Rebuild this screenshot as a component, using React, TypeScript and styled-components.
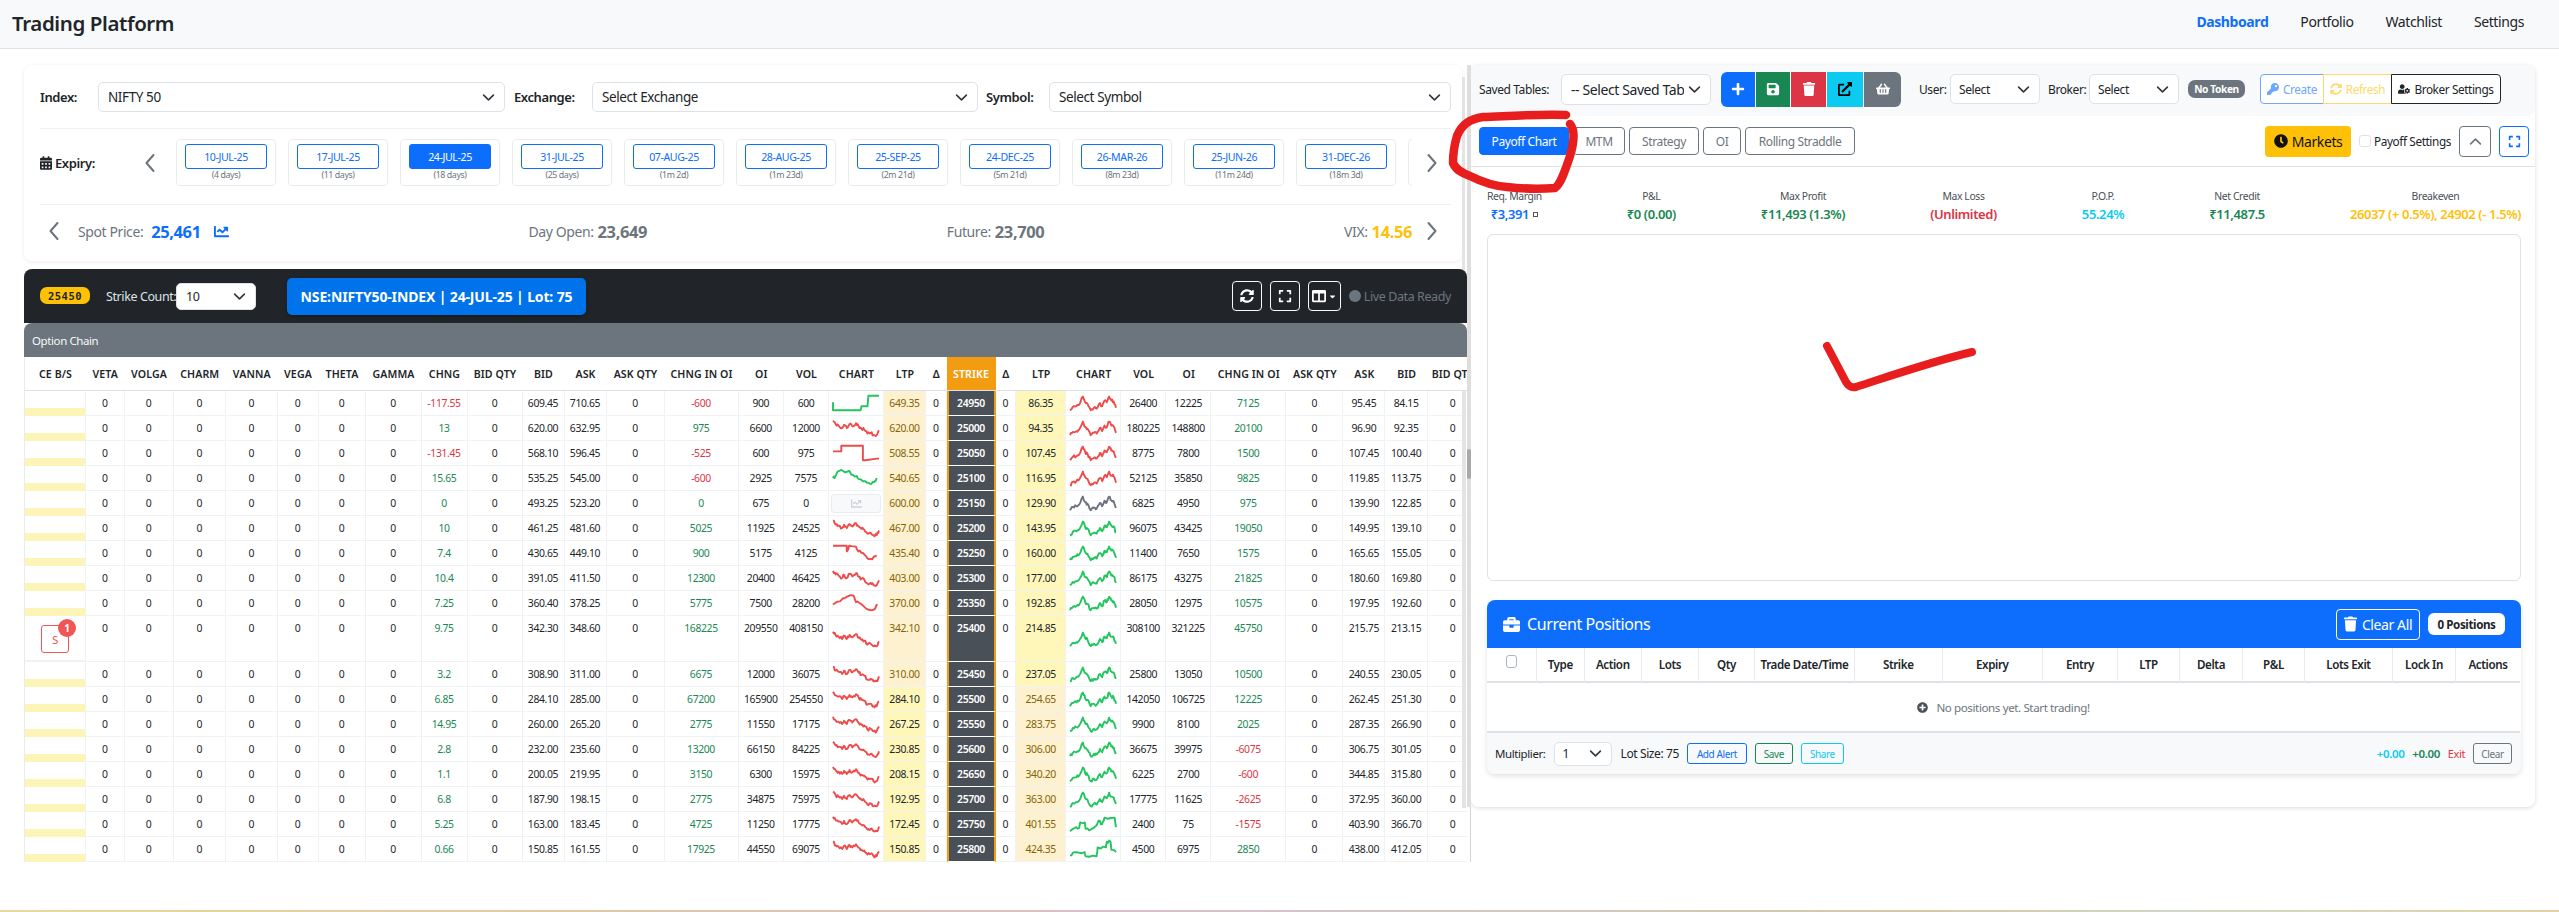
import React from "react";
import styled, { createGlobalStyle } from "styled-components";
import {
  FaCalendarAlt, FaChartLine, FaSyncAlt, FaExpand, FaColumns, FaBriefcase, FaTrash, FaKey, FaUserCog,
  FaClock, FaPlus, FaSave, FaExternalLinkAlt, FaShoppingBasket, FaPlusCircle, FaCaretDown,
} from "react-icons/fa";

const Global = createGlobalStyle`
  html, body { margin: 0; padding: 0; background: #fff; }
  body { font-family: "Noto Sans", "Open Sans", sans-serif; letter-spacing: -0.025em; color: #212529; }
  * { box-sizing: border-box; }
`;

const Page = styled.div`
  width: 2559px; height: 912px; display: flex; flex-direction: column; overflow: hidden; position: relative;
`;
const Nav = styled.header`
  height: 49px; flex: none; background: #f8f9fa; border-bottom: 1px solid #dee2e6;
  display: flex; align-items: flex-start; justify-content: space-between; padding: 9px 35px 0 12px;
`;
const Brand = styled.div`font-size: 20.5px; font-weight: 600; line-height: 28px; color: #212529;`;
const NavLinks = styled.nav`display: flex; gap: 32px; padding-top: 3px;`;
const NavLink = styled.a<{ $active?: boolean }>`
  font-size: 14px; line-height: 19px; color: ${(p) => (p.$active ? "#0d6efd" : "#212529")};
  font-weight: ${(p) => (p.$active ? 700 : 400)};
`;
const Main = styled.main`
  height: 813px; flex: none; display: flex; padding: 16px 0 0 24px; align-items: stretch;
`;
const LeftCol = styled.section`
  width: 1443px; flex: none; display: flex; flex-direction: column; position: relative; height: 797px;
`;
const TopCard = styled.div`
  width: 1438px; height: 196px; background: #fff; border-radius: 8px; padding: 17px 11px 0 16px; flex: none;
  box-shadow: 0 1px 4px rgba(0,0,0,.08);
`;
const TopStrip = styled.div`
  position: absolute; left: 1438px; top: 12px; width: 3px; height: 197px; background: #e4e4e4;
`;
const FieldRow = styled.div`
  display: grid; grid-template-columns: 58px 407px 87px 386px 71px 402px; align-items: center; height: 30px;
`;
const FieldLabel = styled.label<{ $indent?: number }>`
  font-size: 13px; font-weight: 600; padding-left: ${(p) => p.$indent ?? 0}px; white-space: nowrap;
`;
const SelectBox = styled.div<{ $fs?: number; $h?: number; $pl?: number; $w?: number; $ml?: number }>`
  height: ${(p) => p.$h ?? 30}px; ${(p) => (p.$w ? `width: ${p.$w}px; flex: none;` : "")}
  margin-left: ${(p) => p.$ml ?? 0}px;
  border: 1px solid #dee2e6; border-radius: 5px; background: #fff;
  display: flex; align-items: center; justify-content: space-between;
  padding: 0 9px 0 ${(p) => p.$pl ?? 9}px; font-size: ${(p) => p.$fs ?? 13.5}px; color: #212529; white-space: nowrap; overflow: hidden;
`;
const SelectText = styled.span`overflow: hidden; flex: 1; min-width: 0;`;
const Chevron = styled.svg`width: 13px; height: 13px; flex: none; margin-left: 4px;`;
const Caret = () => (
  <Chevron viewBox="0 0 16 16" fill="none" stroke="#343a40" strokeWidth="2" strokeLinecap="round" strokeLinejoin="round">
    <path d="m2 5 6 6 6-6" />
  </Chevron>
);
const Divider = styled.div<{ $top: number }>`height: 1px; background: #eff0f2; margin-top: ${(p) => p.$top}px;`;
const ExpiryRow = styled.div`display: flex; align-items: center; height: 47px; margin-top: 10px;`;
const ExpiryLabel = styled.div`
  width: 100px; flex: none; font-size: 13px; font-weight: 600; display: flex; align-items: center; gap: 3px;
  svg { width: 12px; height: 14px; }
`;
const ArrowCell = styled.div<{ $w: number }>`
  width: ${(p) => p.$w}px; flex: none; display: flex; align-items: center; justify-content: center;
`;
const Track = styled.div`flex: 1; min-width: 0; display: flex; gap: 12px; overflow: hidden;`;
const ExpiryCard = styled.div`
  width: 100px; height: 47px; flex: none; border: 1px solid #e9ecef; border-radius: 4px;
  display: flex; flex-direction: column; align-items: center; padding-top: 4px;
`;
const ExpiryBtn = styled.div<{ $on?: boolean }>`
  width: 82px; height: 25px; border: 1px solid #0d6efd; border-radius: 3px; font-size: 10.6px;
  display: flex; align-items: center; justify-content: center;
  color: ${(p) => (p.$on ? "#fff" : "#0d6efd")}; background: ${(p) => (p.$on ? "#0d6efd" : "#fff")};
`;
const ExpiryDays = styled.div`font-size: 8.8px; color: #6c757d; line-height: 13px; margin-top: 0;`;
const StatsRow = styled.div`display: flex; align-items: center; height: 52px; margin-left: 2px;`;
const StatsInner = styled.div`flex: 1; display: flex; justify-content: space-between; align-items: center; padding-left: 12px;`;
const Stat = styled.div`display: flex; align-items: center; font-size: 14px; color: #6c757d; gap: 4px; white-space: nowrap;`;
const StatVal = styled.b<{ $c?: string }>`font-size: 16.5px; font-weight: 700; color: ${(p) => p.$c ?? "#6c757d"};`;
const ChartIcon = styled(FaChartLine)`width: 15px; height: 15px; color: #0d6efd; margin-left: 9px;`;
const Dark = styled.div`
  margin-top: 8px; width: 1443px; height: 54px; flex: none; background: #212529; border-radius: 8px 8px 0 0;
  display: flex; align-items: center; padding: 0 16px; position: relative;
`;
const StrikeBadge = styled.div`
  width: 50px; height: 17px; margin-top: -1px; border-radius: 7px; background: #ffc107; color: #212529; font-size: 10.5px; font-weight: 600;
  display: flex; align-items: center; justify-content: center; letter-spacing: .05em; font-family: "DejaVu Sans Mono", monospace; flex: none;
`;
const DarkLabel = styled.span`color: #dee2e6; font-size: 12.5px; margin-left: 16px; white-space: nowrap; width: 70px; flex: none;`;
const InstrumentBtn = styled.div`
  margin-left: 31px; width: 299px; height: 37px; background: #0073ea; border-radius: 5px; color: #fff; font-size: 14px; font-weight: 700;
  display: flex; align-items: center; justify-content: center; box-shadow: 0 2px 4px rgba(0,0,0,.3); white-space: nowrap; letter-spacing: -.01em;
`;
const DarkRight = styled.div`margin-left: auto; display: flex; align-items: center; gap: 8px;`;
const IconBtn = styled.div<{ $w?: number }>`
  width: ${(p) => p.$w ?? 30}px; height: 30px; border: 1px solid #f8f9fa; border-radius: 4px; color: #fff;
  display: flex; align-items: center; justify-content: center; gap: 2px;
  svg { width: 14px; height: 14px; }
`;
const SmallCaret = styled(FaCaretDown)`&& { width: 9px; height: 9px; }`;
const LiveDot = styled.span`width: 12px; height: 12px; border-radius: 50%; background: #6c757d; flex: none;`;
const LiveText = styled.span`font-size: 12.5px; color: #6c757d; margin-left: -5px; white-space: nowrap;`;
const ChainHead = styled.div`
  width: 1443px; height: 34px; flex: none; background: #6c757d; border-radius: 8px 8px 0 0; color: #f8f9fa; font-size: 11.5px;
  display: flex; align-items: center; padding-left: 8px; position: relative;
`;
const TableClip = styled.div`
  width: 1443px; flex: 1; min-height: 0; overflow: hidden; background: #fff; position: relative;
  border-left: 1px solid #e9ecef;
`;
const RowStrip = styled.div`
  position: absolute; left: 1437px; top: 34px; width: 4px; height: 417px; background: #e4e4e4; z-index: 2;
`;
const Chain = styled.table`
  table-layout: fixed; width: 1453px; border-collapse: separate; border-spacing: 0; font-size: 10.4px; letter-spacing: -.035em;
`;
const Col = styled.col<{ $w: number }>`width: ${(p) => p.$w}px;`;
const Th = styled.th<{ $strike?: boolean }>`
  height: 34px; padding: 0; font-size: 10.6px; font-weight: 600; letter-spacing: .01em; white-space: nowrap; overflow: hidden;
  border-bottom: 1px solid #dee2e6; color: ${(p) => (p.$strike ? "#fff" : "#212529")};
  background: ${(p) => (p.$strike ? "#f39c12" : "#fff")};
`;
const Td = styled.td<{ $c?: string; $bg?: string; $tall?: boolean }>`
  height: ${(p) => (p.$tall ? 46 : 25)}px; padding: ${(p) => (p.$tall ? "4px 0 0" : "0")}; text-align: center; vertical-align: ${(p) => (p.$tall ? "top" : "middle")};
  border-right: 1px solid #f1f2f4; border-bottom: 1px solid #f1f2f4; color: ${(p) => p.$c ?? "#212529"}; background: ${(p) => p.$bg ?? "transparent"};
  white-space: nowrap; overflow: hidden; line-height: 16px;
`;
const SideCell = styled.td<{ $stripe?: boolean }>`
  height: 25px; padding: 0; border-right: 1px solid #f1f2f4; border-bottom: ${(p) => (p.$stripe ? "0" : "2px solid #f1f2f4")};
  background: ${(p) => (p.$stripe ? "linear-gradient(#fff 17px, #fdf5b8 17px)" : "#fff")}; position: relative;
`;
const StrikeTd = styled.td<{ $tall?: boolean }>`
  height: ${(p) => (p.$tall ? 46 : 25)}px; padding: ${(p) => (p.$tall ? "4px 0 0" : "0")}; text-align: center; vertical-align: ${(p) => (p.$tall ? "top" : "middle")};
  background: #495057; color: #fff; font-weight: 600; line-height: 16px;
  border-left: 2px solid #f39c12; border-right: 2px solid #f39c12; border-bottom: 1px solid #fff;
`;
const SpkCell = styled.td`
  padding: 0; border-right: 1px solid #f1f2f4; border-bottom: 1px solid #f1f2f4; text-align: center; line-height: 0; vertical-align: middle;
`;
const SpkSvg = styled.svg`width: 48px; height: 20px; display: inline-block; vertical-align: middle;`;
const NoData = styled.div`
  width: 50px; height: 19px; margin: 0 auto; background: #f8f9fa; border: 1px solid #e9ecef; border-radius: 3px; display: flex; align-items: center; justify-content: center;
  svg { width: 11px; height: 11px; color: #ced4da; }
`;
const SellBtn = styled.div`
  position: absolute; left: 16px; top: 9px; width: 28px; height: 28px; border: 1px solid #f05656; border-radius: 3px; color: #f05656; font-size: 11.5px;
  display: flex; align-items: center; justify-content: center;
`;
const SellCount = styled.span`
  position: absolute; right: -8px; top: -7px; width: 18px; height: 18px; border-radius: 50%; background: #f05656; color: #fff; font-size: 10px; font-weight: 700;
  display: flex; align-items: center; justify-content: center;
`;
const Resizer = styled.div`
  width: 4px; height: 797px; flex: none; position: relative;
  background: linear-gradient(#dedede 742px, transparent 742px);
  &::before { content: ""; position: absolute; left: 3px; top: 742px; bottom: 0; width: 1px; background: #d5d5d5; }
  &::after { content: ""; position: absolute; left: 0; top: 384px; height: 30px; width: 4px; background: #a9a9a9; border-radius: 2px; }
`;
const RightCard = styled.section`
  width: 1064px; height: 742px; flex: none; background: #fff; border-radius: 8px; box-shadow: 0 1px 4px rgba(0,0,0,.14);
  display: flex; flex-direction: column;
`;
const Toolbar = styled.div`
  height: 51px; flex: none; background: #f8f9fa; border-radius: 8px; display: flex; align-items: center; padding: 0 0 3px 8px; font-size: 12px;
`;
const ToolText = styled.span<{ $ml?: number; $w?: number }>`
  margin-left: ${(p) => p.$ml ?? 0}px; white-space: nowrap; font-size: 12px; ${(p) => (p.$w ? `width:${p.$w}px; flex:none;` : "")}
`;
const ActionGroup = styled.div`display: flex; margin-left: 10px; border-radius: 6px; overflow: hidden; height: 35px; gap: 1px;`;
const ActionBtn = styled.div<{ $bg: string; $c?: string; $w: number }>`
  width: ${(p) => p.$w}px; background: ${(p) => p.$bg}; color: ${(p) => p.$c ?? "#fff"}; display: flex; align-items: center; justify-content: center;
  svg { width: 14px; height: 14px; }
`;
const NoToken = styled.span`
  margin-left: 9px; width: 57px; height: 18px; border-radius: 7px; background: #6c757d; color: #fff; font-size: 10.2px; font-weight: 700;
  display: flex; align-items: center; justify-content: center; white-space: nowrap; flex: none;
`;
const BrokerGroup = styled.div`display: flex; margin-left: 16px; height: 30px;`;
const BrokerBtn = styled.div<{ $c: string; $b: string; $w: number; $r?: string }>`
  width: ${(p) => p.$w}px; height: 30px; border: 1px solid ${(p) => p.$b}; color: ${(p) => p.$c}; font-size: 11.8px; background: #fff;
  margin-left: -1px; border-radius: ${(p) => p.$r ?? "0"}; display: flex; align-items: center; justify-content: center; gap: 4px; white-space: nowrap;
  svg { width: 12px; height: 12px; }
`;
const TabsRow = styled.div`
  height: 51px; flex: none; border-bottom: 1px solid #dee2e6; display: flex; align-items: center; padding: 0 6px 0 8px; gap: 4px;
`;
const Tab = styled.div<{ $on?: boolean; $w: number }>`
  width: ${(p) => p.$w}px; height: 28px; border-radius: 4px; border: 1px solid ${(p) => (p.$on ? "#0d6efd" : "#6c757d")};
  background: ${(p) => (p.$on ? "#0d6efd" : "#fff")}; color: ${(p) => (p.$on ? "#fff" : "#6c757d")};
  font-size: 12px; display: flex; align-items: center; justify-content: center; white-space: nowrap; flex: none;
`;
const TabsRight = styled.div`margin-left: auto; display: flex; align-items: center;`;
const MarketsBtn = styled.div`
  width: 86px; height: 31px; background: #ffc107; border-radius: 4px; color: #111; font-size: 14px; display: flex; align-items: center; justify-content: center; gap: 4px;
  svg { width: 14px; height: 14px; }
`;
const CheckBox = styled.span`width: 12px; height: 12px; border: 1px solid #dee2e6; border-radius: 3px; background: #fff; margin-left: 8px; flex: none;`;
const CheckLabel = styled.span`font-size: 11.8px; margin-left: 3px; white-space: nowrap;`;
const OutlineBtn = styled.div<{ $c: string; $w: number; $ml: number }>`
  width: ${(p) => p.$w}px; height: 31px; margin-left: ${(p) => p.$ml}px; border: 1px solid ${(p) => p.$c}; border-radius: 4px; color: ${(p) => p.$c};
  display: flex; align-items: center; justify-content: center;
  svg { width: 13px; height: 13px; }
`;
const Metrics = styled.div`
  height: 67px; flex: none; display: flex; justify-content: space-between; padding: 20px 14px 0 16px;
`;
const Metric = styled.div`display: flex; flex-direction: column; align-items: center; white-space: nowrap;`;
const MetricLabel = styled.span`font-size: 10.4px; color: #495057; line-height: 18px;`;
const MetricVal = styled.span<{ $c: string }>`font-size: 13px; font-weight: 600; color: ${(p) => p.$c}; line-height: 19px; display: flex; align-items: center; gap: 4px;`;
const TinySquare = styled.span`width: 5px; height: 5px; border: 1px solid #555; display: inline-block;`;
const PayoffBox = styled.div`
  height: 347px; flex: none; margin: 0 14px 0 16px; border: 1px solid #dee2e6; border-radius: 6px; background: #fff;
`;
const Positions = styled.div`
  margin: 19px 14px 0 16px; border-radius: 8px; box-shadow: 0 2px 5px rgba(0,0,0,.12); flex: none;
`;
const PosHead = styled.div`
  height: 48px; background: #0d6efd; border-radius: 8px 8px 0 0; color: #fff; display: flex; align-items: center; padding: 0 16px;
`;
const PosTitle = styled.div`
  font-size: 16px; display: flex; align-items: center; gap: 7px; svg { width: 17px; height: 17px; }
`;
const ClearBtn = styled.div`
  margin-left: auto; width: 84px; height: 31px; border: 1px solid #fff; border-radius: 4px; font-size: 14px; display: flex; align-items: center; justify-content: center; gap: 5px;
  svg { width: 13px; height: 16px; }
`;
const CountPill = styled.div`
  margin-left: 8px; width: 77px; height: 22px; background: #fff; color: #212529; border-radius: 6px; font-size: 11.6px; font-weight: 700; display: flex; align-items: center; justify-content: center;
`;
const PosTable = styled.table`
  table-layout: fixed; width: 1033px; border-collapse: separate; border-spacing: 0; font-size: 11.6px;
`;
const PosTh = styled.th`
  height: 35px; padding: 0; font-weight: 600; white-space: nowrap; border-right: 1px solid #e9ecef; border-bottom: 2px solid #dee2e6;
  &:last-child { border-right: 0; }
`;
const PosCheck = styled.span`display: inline-block; width: 11px; height: 13px; border: 1px solid #adb5bd; border-radius: 3px; vertical-align: middle; margin-top: -8px;`;
const EmptyCell = styled.td`
  height: 50px; padding: 0; text-align: center; font-size: 11.6px; color: #6c757d; border-bottom: 2px solid #dee2e6;
  svg { width: 11px; height: 11px; vertical-align: -1px; margin-right: 8px; color: #495057; }
`;
const PosFoot = styled.div`
  height: 41px; background: #f8f9fa; border-radius: 0 0 8px 8px; display: flex; align-items: center; padding: 0 9px 0 8px; font-size: 11.5px;
`;
const FootBtn = styled.div<{ $c: string; $w: number; $ml?: number }>`
  width: ${(p) => p.$w}px; height: 21px; margin-left: ${(p) => p.$ml ?? 8}px; border: 1px solid ${(p) => p.$c}; border-radius: 3px; color: ${(p) => p.$c}; font-size: 10px;
  display: flex; align-items: center; justify-content: center; white-space: nowrap; background: transparent; flex: none;
`;
const FootRight = styled.div`margin-left: auto; display: flex; align-items: center; gap: 8px;`;
const FootVal = styled.span<{ $c: string }>`color: ${(p) => p.$c}; font-size: 11.5px; font-weight: 600;`;
const ExitText = styled.span`color: #dc3545; font-size: 11px;`;
const Sheen = styled.div`
  height: 2px; flex: none; margin-top: auto;
  background: linear-gradient(90deg, #e6d9a0, #dcc9a8 25%, #d8bfc9 45%, #cfc9c0 60%, #d6c7a5 75%, #cfd9c7 85%, #e3d3a6);
`;
const Marks = styled.svg`position: absolute; left: 0; top: 0; width: 2559px; height: 912px; pointer-events: none; z-index: 5;`;

const chainCols = [61, 38.5, 49, 52.5, 51.5, 41, 47, 56, 46, 55, 42, 42, 58, 74, 45.5, 45, 55, 42, 20.5, 49, 20.7, 50, 55, 45, 45, 75, 57.2, 42, 42.5, 50];
const heads = ["CE B/S","VETA","VOLGA","CHARM","VANNA","VEGA","THETA","GAMMA","CHNG","BID QTY","BID","ASK","ASK QTY","CHNG IN OI","OI","VOL","CHART","LTP","Δ","STRIKE","Δ","LTP","CHART","VOL","OI","CHNG IN OI","ASK QTY","ASK","BID","BID QTY"];
const rows: (string | number)[][] = [
  ["-117.55","609.45","710.65","-600",900,600,"649.35",24950,"86.35",26400,12225,7125,"95.45","84.15"],
  ["13","620.00","632.95","975",6600,12000,"620.00",25000,"94.35",180225,148800,20100,"96.90","92.35"],
  ["-131.45","568.10","596.45","-525",600,975,"508.55",25050,"107.45",8775,7800,1500,"107.45","100.40"],
  ["15.65","535.25","545.00","-600",2925,7575,"540.65",25100,"116.95",52125,35850,9825,"119.85","113.75"],
  ["0","493.25","523.20","0",675,0,"600.00",25150,"129.90",6825,4950,975,"139.90","122.85"],
  ["10","461.25","481.60","5025",11925,24525,"467.00",25200,"143.95",96075,43425,19050,"149.95","139.10"],
  ["7.4","430.65","449.10","900",5175,4125,"435.40",25250,"160.00",11400,7650,1575,"165.65","155.05"],
  ["10.4","391.05","411.50","12300",20400,46425,"403.00",25300,"177.00",86175,43275,21825,"180.60","169.80"],
  ["7.25","360.40","378.25","5775",7500,28200,"370.00",25350,"192.85",28050,12975,10575,"197.95","192.60"],
  ["9.75","342.30","348.60","168225",209550,408150,"342.10",25400,"214.85",308100,321225,45750,"215.75","213.15"],
  ["3.2","308.90","311.00","6675",12000,36075,"310.00",25450,"237.05",25800,13050,10500,"240.55","230.05"],
  ["6.85","284.10","285.00","67200",165900,254550,"284.10",25500,"254.65",142050,106725,12225,"262.45","251.30"],
  ["14.95","260.00","265.20","2775",11550,17175,"267.25",25550,"283.75",9900,8100,2025,"287.35","266.90"],
  ["2.8","232.00","235.60","13200",66150,84225,"230.85",25600,"306.00",36675,39975,-6075,"306.75","301.05"],
  ["1.1","200.05","219.95","3150",6300,15975,"208.15",25650,"340.20",6225,2700,-600,"344.85","315.80"],
  ["6.8","187.90","198.15","2775",34875,75975,"192.95",25700,"363.00",17775,11625,-2625,"372.95","360.00"],
  ["5.25","163.00","183.45","4725",11250,17775,"172.45",25750,"401.55",2400,75,-1575,"403.90","366.70"],
  ["0.66","150.85","161.55","17925",44550,69075,"150.85",25800,"424.35",4500,6975,2850,"438.00","412.05"],
];

const RED = "#ef4b4b", GREEN = "#22c55e", GREY = "#6b7280";
type P = [number, number];
const CE: P[] = [[0,.05],[.06,.28],[.12,.35],[.2,.5],[.24,.3],[.3,.5],[.36,.25],[.42,.4],[.5,.2],[.56,.42],[.62,.55],[.68,.6],[.75,.85],[.82,.8],[.88,.95],[.95,.95],[1,.65]];
const PE: P[] = [[0,.95],[.06,.75],[.14,.7],[.2,.6],[.28,.1],[.33,.45],[.38,.55],[.45,.95],[.52,.8],[.58,.85],[.65,.5],[.7,.7],[.75,.35],[.8,.45],[.85,.1],[.9,.35],[.95,.4],[1,.8]];
const shapes: Record<string, P[]> = {
  s1: [[0,.45],[0,.95],[.6,.95],[.62,.7],[.75,.7],[.77,.05],[1,.05]],
  s3: [[0,.4],[.18,.4],[.18,.05],[.65,.05],[.65,.95],[.7,.95],[.95,.85],[1,.85]],
  s4: [[0,.5],[.05,.4],[.1,.1],[.35,.05],[.42,.3],[.5,.4],[.55,.55],[.7,.7],[.8,.85],[.9,.75],[.95,.5]],
  s7: [[0,.05],[.3,.05],[.3,.4],[.35,.05],[.5,.1],[.55,.4],[.65,.5],[.75,.85],[.85,.9],[.95,.7]],
  s9: [[0,.6],[.15,.4],[.25,.2],[.45,.05],[.5,.45],[.6,.55],[.72,.85],[.9,.9],[.97,.6]],
  p17: [[0,.95],[.1,.75],[.2,.75],[.22,.4],[.32,.4],[.34,.8],[.45,.85],[.55,.65],[.62,.3],[.7,.5],[.75,.1],[.97,.1],[1,.7]],
  p18: [[0,.9],[.1,.7],[.32,.7],[.34,.95],[.58,.95],[.6,.4],[.78,.4],[.8,.05],[.88,.05],[.9,.55],[1,.7]],
};
function noisy(base: P[], seed: number): string {
  const pts: string[] = [];
  let s = seed * 97 + 13;
  for (let i = 0; i < base.length - 1; i++) {
    const [x0, y0] = base[i];
    const [x1, y1] = base[i + 1];
    for (let k = 0; k < 3; k++) {
      s = (s * 7919 + 31) % 1009;
      const t = k / 3;
      const j = k === 0 ? 0 : (s / 1009 - 0.5) * 0.18;
      pts.push(`${(x0 + (x1 - x0) * t) * 46 + 1},${(y0 + (y1 - y0) * t + j) * 16 + 2}`);
    }
  }
  const [xe, ye] = base[base.length - 1];
  pts.push(`${xe * 46 + 1},${ye * 16 + 2}`);
  return pts.join(" ");
}
function plain(base: P[]): string {
  return base.map(([x, y]) => `${x * 46 + 1},${y * 16 + 2}`).join(" ");
}
const Spark = ({ base, color, seed, raw }: { base: P[]; color: string; seed: number; raw?: boolean }) => (
  <SpkSvg viewBox="0 0 48 20" fill="none" stroke={color} strokeWidth="1.9" strokeLinejoin="round">
    <polyline points={raw ? plain(base) : noisy(base, seed)} />
  </SpkSvg>
);

const Lt = "#fdf1d0", Yl = "#fef7b9", Br = "#856404";
const green = "#198754", redT = "#dc3545";
const signC = (v: string | number) => (String(v).startsWith("-") ? redT : green);

const ChainRow = ({ r, i }: { r: (string | number)[]; i: number }) => {
  const tall = i === 9;
  const cePeach = i <= 10;
  const pePeach = i >= 11;
  const zero = (k: number) => <Td key={k} $tall={tall}>0</Td>;
  const ceSpark =
    i === 4 ? <NoData><FaChartLine /></NoData> :
    i === 0 ? <Spark base={shapes.s1} color={GREEN} seed={i} raw /> :
    i === 2 ? <Spark base={shapes.s3} color={RED} seed={i} raw /> :
    i === 3 ? <Spark base={shapes.s4} color={GREEN} seed={i} /> :
    i === 6 ? <Spark base={shapes.s7} color={RED} seed={i} /> :
    i === 8 ? <Spark base={shapes.s9} color={RED} seed={i} /> :
    <Spark base={CE} color={RED} seed={i} />;
  const peColor = i <= 3 ? RED : i === 4 ? GREY : GREEN;
  const peShape = i === 16 ? shapes.p17 : i === 17 ? shapes.p18 : PE;
  return (
    <tr>
      <SideCell $stripe={!tall}>
        {tall && <SellBtn>S<SellCount>1</SellCount></SellBtn>}
      </SideCell>
      {[1, 2, 3, 4, 5, 6, 7].map(zero)}
      <Td $c={signC(r[0])} $tall={tall}>{r[0]}</Td>
      {zero(8)}
      <Td $tall={tall}>{r[1]}</Td>
      <Td $tall={tall}>{r[2]}</Td>
      {zero(9)}
      <Td $c={signC(r[3])} $tall={tall}>{r[3]}</Td>
      <Td $tall={tall}>{r[4]}</Td>
      <Td $tall={tall}>{r[5]}</Td>
      <SpkCell>{ceSpark}</SpkCell>
      <Td $bg={cePeach ? Lt : Yl} $c={cePeach ? Br : "#212529"} $tall={tall}>{r[6]}</Td>
      {zero(10)}
      <StrikeTd $tall={tall}>{r[7]}</StrikeTd>
      {zero(11)}
      <Td $bg={pePeach ? Lt : Yl} $c={pePeach ? Br : "#212529"} $tall={tall}>{r[8]}</Td>
      <SpkCell><Spark base={peShape} color={peColor} seed={i + 40} /></SpkCell>
      <Td $tall={tall}>{r[9]}</Td>
      <Td $tall={tall}>{r[10]}</Td>
      <Td $c={signC(r[11])} $tall={tall}>{r[11]}</Td>
      {zero(12)}
      <Td $tall={tall}>{r[12]}</Td>
      <Td $tall={tall}>{r[13]}</Td>
      {zero(13)}
    </tr>
  );
};

const expiries: [string, string][] = [
  ["10-JUL-25","(4 days)"],["17-JUL-25","(11 days)"],["24-JUL-25","(18 days)"],["31-JUL-25","(25 days)"],["07-AUG-25","(1m 2d)"],
  ["28-AUG-25","(1m 23d)"],["25-SEP-25","(2m 21d)"],["24-DEC-25","(5m 21d)"],["26-MAR-26","(8m 23d)"],["25-JUN-26","(11m 24d)"],["31-DEC-26","(18m 3d)"],
];

const Arrow = ({ dir }: { dir: "l" | "r" }) => (
  <svg width="12" height="20" viewBox="0 0 12 20" fill="none" stroke="#6c757d" strokeWidth="2" strokeLinecap="round" strokeLinejoin="round">
    <path d={dir === "l" ? "M9.5 2 2.5 10l7 8" : "M2.5 2l7 8-7 8"} />
  </svg>
);

const posCols = [50, 47.5, 57.5, 57, 56, 100, 87.5, 100.5, 75, 62, 63, 62, 88, 63, 64];
const posHeads = ["Type","Action","Lots","Qty","Trade Date/Time","Strike","Expiry","Entry","LTP","Delta","P&L","Lots Exit","Lock In","Actions"];

export default function App() {
  return (
    <Page>
      <Global />
      <Nav>
        <Brand>Trading Platform</Brand>
        <NavLinks>
          <NavLink $active>Dashboard</NavLink>
          <NavLink>Portfolio</NavLink>
          <NavLink>Watchlist</NavLink>
          <NavLink>Settings</NavLink>
        </NavLinks>
      </Nav>
      <Main>
        <LeftCol>
          <TopStrip />
          <TopCard>
            <FieldRow>
              <FieldLabel>Index:</FieldLabel>
              <SelectBox><SelectText>NIFTY 50</SelectText><Caret /></SelectBox>
              <FieldLabel $indent={9}>Exchange:</FieldLabel>
              <SelectBox><SelectText>Select Exchange</SelectText><Caret /></SelectBox>
              <FieldLabel $indent={8}>Symbol:</FieldLabel>
              <SelectBox><SelectText>Select Symbol</SelectText><Caret /></SelectBox>
            </FieldRow>
            <Divider $top={16} />
            <ExpiryRow>
              <ExpiryLabel><FaCalendarAlt />Expiry:</ExpiryLabel>
              <ArrowCell $w={20}><Arrow dir="l" /></ArrowCell>
              <ArrowCell $w={16} />
              <Track>
                {expiries.map(([d, t], i) => (
                  <ExpiryCard key={d}>
                    <ExpiryBtn $on={i === 2}>{d}</ExpiryBtn>
                    <ExpiryDays>{t}</ExpiryDays>
                  </ExpiryCard>
                ))}
                <ExpiryCard />
              </Track>
              <ArrowCell $w={39}><Arrow dir="r" /></ArrowCell>
            </ExpiryRow>
            <Divider $top={18} />
            <StatsRow>
              <ArrowCell $w={24}><Arrow dir="l" /></ArrowCell>
              <StatsInner>
                <Stat>Spot Price:<StatVal $c="#0d6efd">&nbsp;25,461</StatVal><ChartIcon /></Stat>
                <Stat>Day Open:<StatVal>23,649</StatVal></Stat>
                <Stat>Future:<StatVal>23,700</StatVal></Stat>
                <Stat>VIX:<StatVal $c="#ffc107">14.56</StatVal></Stat>
              </StatsInner>
              <ArrowCell $w={39}><Arrow dir="r" /></ArrowCell>
            </StatsRow>
          </TopCard>
          <Dark>
            <StrikeBadge>25450</StrikeBadge>
            <DarkLabel>Strike Count:</DarkLabel>
            <SelectBox $w={80} $h={27} $fs={12.5} $pl={9}><SelectText>10</SelectText><Caret /></SelectBox>
            <InstrumentBtn>NSE:NIFTY50-INDEX | 24-JUL-25 | Lot: 75</InstrumentBtn>
            <DarkRight>
              <IconBtn><FaSyncAlt /></IconBtn>
              <IconBtn><FaExpand /></IconBtn>
              <IconBtn $w={33}><FaColumns /><SmallCaret /></IconBtn>
              <LiveDot />
              <LiveText>Live Data Ready</LiveText>
            </DarkRight>
          </Dark>
          <ChainHead>Option Chain</ChainHead>
          <TableClip>
            <RowStrip />
            <Chain>
              <colgroup>{chainCols.map((w, i) => <Col key={i} $w={w} />)}</colgroup>
              <thead>
                <tr>{heads.map((h, i) => <Th key={i} $strike={h === "STRIKE"}>{h}</Th>)}</tr>
              </thead>
              <tbody>
                {rows.map((r, i) => <ChainRow key={i} r={r} i={i} />)}
              </tbody>
            </Chain>
          </TableClip>
        </LeftCol>
        <Resizer />
        <RightCard>
          <Toolbar>
            <ToolText $w={82}>Saved Tables:</ToolText>
            <SelectBox $w={150} $h={31} $fs={14} $pl={9}><SelectText>-- Select Saved Table</SelectText><Caret /></SelectBox>
            <ActionGroup>
              <ActionBtn $bg="#0d6efd" $w={34}><FaPlus /></ActionBtn>
              <ActionBtn $bg="#198754" $w={34}><FaSave /></ActionBtn>
              <ActionBtn $bg="#dc3545" $w={35}><FaTrash /></ActionBtn>
              <ActionBtn $bg="#0dcaf0" $c="#000" $w={36}><FaExternalLinkAlt /></ActionBtn>
              <ActionBtn $bg="#6c757d" $w={37}><FaShoppingBasket /></ActionBtn>
            </ActionGroup>
            <ToolText $ml={18} $w={31}>User:</ToolText>
            <SelectBox $w={90} $h={30} $fs={12} $pl={8}><SelectText>Select</SelectText><Caret /></SelectBox>
            <ToolText $ml={8} $w={41}>Broker:</ToolText>
            <SelectBox $w={90} $h={30} $fs={12} $pl={8}><SelectText>Select</SelectText><Caret /></SelectBox>
            <NoToken>No Token</NoToken>
            <BrokerGroup>
              <BrokerBtn $c="#6ea8fe" $b="#6ea8fe" $w={64} $r="4px 0 0 4px"><FaKey />Create</BrokerBtn>
              <BrokerBtn $c="#ffda6a" $b="#ffda6a" $w={69}><FaSyncAlt />Refresh</BrokerBtn>
              <BrokerBtn $c="#212529" $b="#212529" $w={110} $r="0 4px 4px 0"><FaUserCog />Broker Settings</BrokerBtn>
            </BrokerGroup>
          </Toolbar>
          <TabsRow>
            <Tab $on $w={90}>Payoff Chart</Tab>
            <Tab $w={52}>MTM</Tab>
            <Tab $w={70}>Strategy</Tab>
            <Tab $w={38}>OI</Tab>
            <Tab $w={110}>Rolling Straddle</Tab>
            <TabsRight>
              <MarketsBtn><FaClock />Markets</MarketsBtn>
              <CheckBox />
              <CheckLabel>Payoff Settings</CheckLabel>
              <OutlineBtn $c="#6c757d" $w={32} $ml={8}>
                <svg width="13" height="13" viewBox="0 0 16 16" fill="none" stroke="currentColor" strokeWidth="2" strokeLinecap="round" strokeLinejoin="round"><path d="m2 11 6-6 6 6" /></svg>
              </OutlineBtn>
              <OutlineBtn $c="#0d6efd" $w={30} $ml={8}><FaExpand /></OutlineBtn>
            </TabsRight>
          </TabsRow>
          <Metrics>
            <Metric><MetricLabel>Req. Margin</MetricLabel><MetricVal $c="#0d6efd">₹3,391 <TinySquare /></MetricVal></Metric>
            <Metric><MetricLabel>P&amp;L</MetricLabel><MetricVal $c={green}>₹0 (0.00)</MetricVal></Metric>
            <Metric><MetricLabel>Max Profit</MetricLabel><MetricVal $c={green}>₹11,493 (1.3%)</MetricVal></Metric>
            <Metric><MetricLabel>Max Loss</MetricLabel><MetricVal $c={redT}>(Unlimited)</MetricVal></Metric>
            <Metric><MetricLabel>P.O.P.</MetricLabel><MetricVal $c="#0dcaf0">55.24%</MetricVal></Metric>
            <Metric><MetricLabel>Net Credit</MetricLabel><MetricVal $c={green}>₹11,487.5</MetricVal></Metric>
            <Metric><MetricLabel>Breakeven</MetricLabel><MetricVal $c="#ffc107">26037 (+ 0.5%), 24902 (- 1.5%)</MetricVal></Metric>
          </Metrics>
          <PayoffBox />
          <Positions>
            <PosHead>
              <PosTitle><FaBriefcase />Current Positions</PosTitle>
              <ClearBtn><FaTrash />Clear All</ClearBtn>
              <CountPill>0 Positions</CountPill>
            </PosHead>
            <PosTable>
              <colgroup>{posCols.map((w, i) => <Col key={i} $w={w} />)}</colgroup>
              <thead>
                <tr>
                  <PosTh><PosCheck /></PosTh>
                  {posHeads.map((h) => <PosTh key={h}>{h}</PosTh>)}
                </tr>
              </thead>
              <tbody>
                <tr><EmptyCell colSpan={15}><FaPlusCircle />No positions yet. Start trading!</EmptyCell></tr>
              </tbody>
            </PosTable>
            <PosFoot>
              Multiplier:
              <SelectBox $w={58} $h={24} $fs={12} $pl={8} $ml={8}><SelectText>1</SelectText><Caret /></SelectBox>
              <ToolText $ml={9}>Lot Size: 75</ToolText>
              <FootBtn $c="#0d6efd" $w={60}>Add Alert</FootBtn>
              <FootBtn $c={green} $w={38}>Save</FootBtn>
              <FootBtn $c="#0dcaf0" $w={43}>Share</FootBtn>
              <FootRight>
                <FootVal $c="#0dcaf0">+0.00</FootVal>
                <FootVal $c={green}>+0.00</FootVal>
                <ExitText>Exit</ExitText>
                <FootBtn $c="#6c757d" $w={39} $ml={0}>Clear</FootBtn>
              </FootRight>
            </PosFoot>
          </Positions>
        </RightCard>
      </Main>
      <Sheen />
      <Marks viewBox="0 0 2559 912" fill="none" stroke="#e81e1e" strokeLinecap="round" strokeLinejoin="round">
        <path strokeWidth="8.5" d="M1566 115 C1540 114 1510 116 1483 117 C1470 119 1462 124 1457 136 C1454 146 1453 156 1453 163 C1456 170 1462 173 1470 176 C1482 182 1494 186 1507 187 C1525 189 1542 189 1555 188 C1561 184 1566 168 1570 156 C1573 146 1574 135 1573 130 C1572 127 1571 125 1570 124" />
        <path strokeWidth="8" d="M1827 346 L1846 382 C1849 387 1852 388 1856 387 C1890 376 1930 362 1972 352" />
      </Marks>
    </Page>
  );
}
